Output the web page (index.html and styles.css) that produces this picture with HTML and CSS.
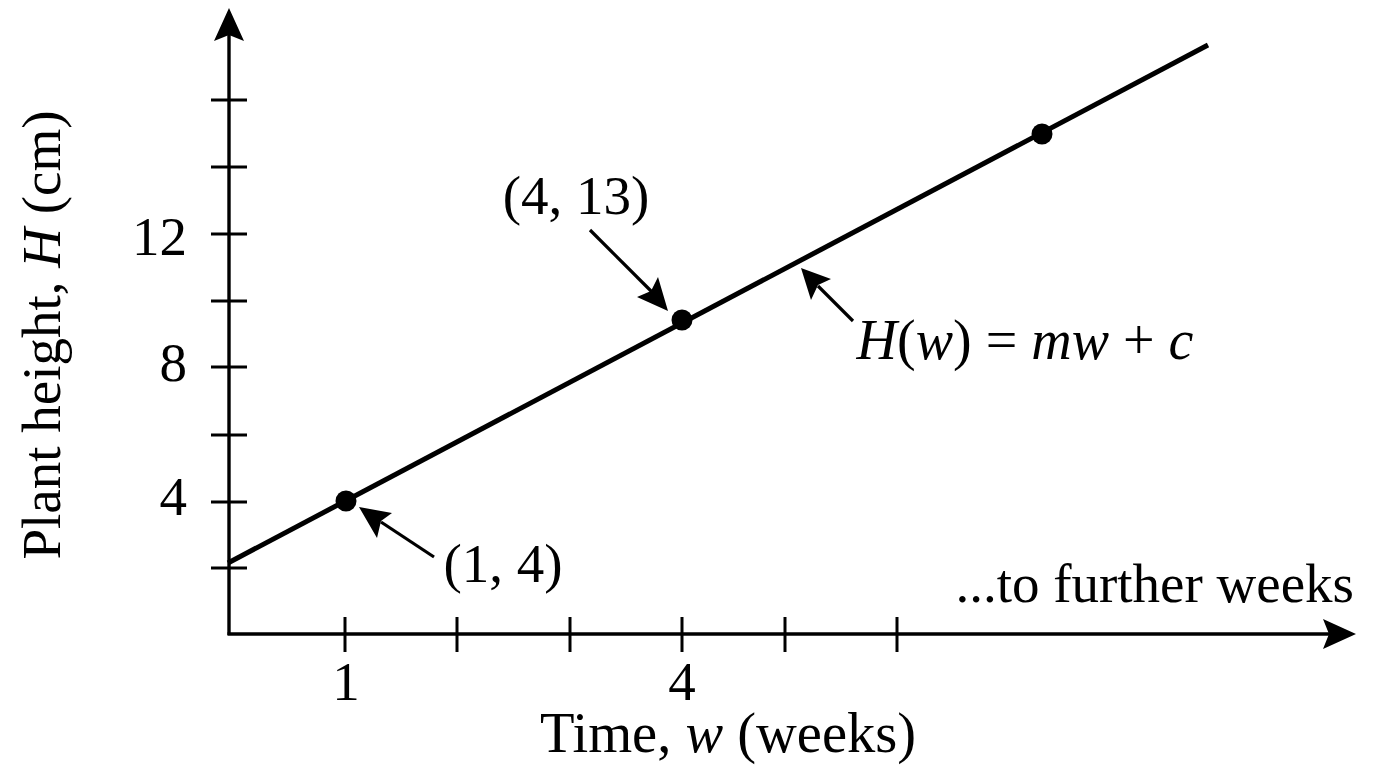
FILE: index.html
```html
<!DOCTYPE html>
<html lang="en">
<head>
<meta charset="utf-8">
<title>Plant height graph</title>
<link rel="stylesheet" href="styles.css">
</head>
<body>
<main class="page">
<svg class="graph" width="1376" height="768" viewBox="0 0 1376 768" xmlns="http://www.w3.org/2000/svg">
  <!-- axes -->
  <line class="axis" x1="229" y1="635" x2="229" y2="34"/>
  <polygon class="head" points="229,8 244,41 229,35 214,41"/>
  <line class="axis" x1="227.5" y1="634" x2="1330" y2="634"/>
  <polygon class="head" points="1356,634 1323,619 1329,634 1323,649"/>

  <!-- y ticks -->
  <line class="tick" x1="211" y1="100" x2="247" y2="100"/>
  <line class="tick" x1="211" y1="167" x2="247" y2="167"/>
  <line class="tick" x1="211" y1="234" x2="247" y2="234"/>
  <line class="tick" x1="211" y1="301" x2="247" y2="301"/>
  <line class="tick" x1="211" y1="367" x2="247" y2="367"/>
  <line class="tick" x1="211" y1="435" x2="247" y2="435"/>
  <line class="tick" x1="211" y1="502" x2="247" y2="502"/>
  <line class="tick" x1="211" y1="568" x2="247" y2="568"/>

  <!-- x ticks -->
  <line class="tick" x1="345" y1="617" x2="345" y2="652"/>
  <line class="tick" x1="457" y1="617" x2="457" y2="652"/>
  <line class="tick" x1="570" y1="617" x2="570" y2="652"/>
  <line class="tick" x1="682" y1="617" x2="682" y2="652"/>
  <line class="tick" x1="785" y1="617" x2="785" y2="652"/>
  <line class="tick" x1="897" y1="617" x2="897" y2="652"/>

  <!-- main line -->
  <line class="fn" x1="228" y1="563" x2="1208" y2="45"/>
  <circle class="dot" cx="346" cy="501" r="10.5"/>
  <circle class="dot" cx="682" cy="320" r="10.5"/>
  <circle class="dot" cx="1042" cy="134" r="10.5"/>

  <!-- annotation arrows -->
  <line class="pointer" x1="590" y1="230" x2="652" y2="292"/>
  <polygon class="head" points="668,311 637,297 651,291 658,277"/>
  <line class="pointer" x1="434" y1="557" x2="381" y2="522"/>
  <polygon class="head" points="359,507 392,513 381,521 377,538"/>
  <line class="pointer" x1="853" y1="321" x2="818" y2="286"/>
  <polygon class="head" points="801,268 831,279 818,285 811,300"/>

  <!-- tick labels -->
  <text class="num" x="187" y="255" text-anchor="end">12</text>
  <text class="num" x="187" y="381" text-anchor="end">8</text>
  <text class="num" x="187" y="515" text-anchor="end">4</text>
  <text class="num" x="346" y="700" text-anchor="middle">1</text>
  <text class="num" x="682" y="700" text-anchor="middle">4</text>

  <!-- labels -->
  <text class="num" x="576" y="214" text-anchor="middle">(4, 13)</text>
  <text class="num" x="503" y="582" text-anchor="middle">(1, 4)</text>
  <text class="num formula" x="1025" y="359" text-anchor="middle"><tspan class="it">H</tspan>(<tspan class="it">w</tspan>) = <tspan class="it">mw</tspan> + <tspan class="it">c</tspan></text>
  <text class="num" x="1354" y="602" text-anchor="end">...to further weeks</text>
  <text class="axis-title" x="728" y="752" text-anchor="middle">Time, <tspan class="it">w</tspan> (weeks)</text>
  <text class="axis-title side" x="0" y="0" text-anchor="middle" transform="translate(60 335) rotate(-90)">Plant height, <tspan class="it">H</tspan> (cm)</text>
</svg>
</main>
</body>
</html>
```

FILE: styles.css
```css
html, body {
  margin: 0;
  padding: 0;
  background: #ffffff;
}

.page {
  display: block;
  width: 1376px;
  height: 768px;
  overflow: hidden;
}

.graph {
  display: block;
}

.axis {
  stroke: #000;
  stroke-width: 3.4;
}

.tick {
  stroke: #000;
  stroke-width: 3;
}

.fn {
  stroke: #000;
  stroke-width: 5;
  stroke-linecap: butt;
}

.pointer {
  stroke: #000;
  stroke-width: 3.2;
}

.head,
.dot {
  fill: #000;
}

.num,
.axis-title {
  font-family: "Liberation Serif", "Times New Roman", serif;
  font-size: 55px;
  fill: #000;
}

.formula {
  font-size: 56px;
}

.axis-title {
  font-size: 56.5px;
}

.axis-title.side {
  font-size: 55px;
}

.it {
  font-style: italic;
}
```
